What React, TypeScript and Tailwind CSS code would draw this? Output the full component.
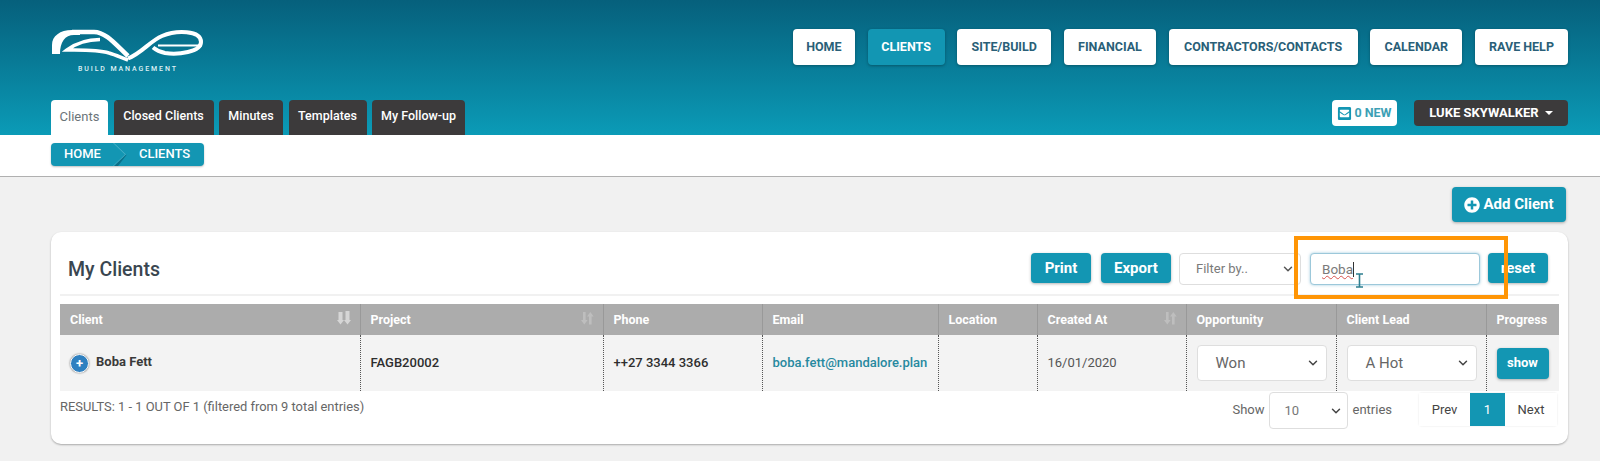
import React from 'react';
import { FaEnvelopeSquare, FaPlusCircle } from 'react-icons/fa';
import { ChevronDown } from 'lucide-react';

const navItems = [
  { label: 'HOME', width: 'w-[62px]' },
  { label: 'CLIENTS', width: 'w-[77px]' },
  { label: 'SITE/BUILD', width: 'w-[94px]' },
  { label: 'FINANCIAL', width: 'w-[92px]' },
  { label: 'CONTRACTORS/CONTACTS', width: 'w-[189px]' },
  { label: 'CALENDAR', width: 'w-[92px]' },
  { label: 'RAVE HELP', width: 'w-[93px]' },
];
const tabs = [
  { label: 'Closed Clients', width: 'w-[100px]' },
  { label: 'Minutes', width: 'w-[64px]' },
  { label: 'Templates', width: 'w-[78px]' },
  { label: 'My Follow-up', width: 'w-[93px]' },
];

const RaveLogo = () => (
  <svg width="156" height="36" viewBox="50 28 156 36" className="block" fill="none" stroke="#fff">
    {/* r stem */}
    <path d="M52 54 V45 C52 36 60 30 72 30 H80 V35 H74 C65 35 60 42 60 54 Z" fill="#fff" stroke="none" />
    {/* top band running into the left arm of the v */}
    <path d="M72 32 H94 C106 32 116 45 128 56" strokeWidth="4.5" />
    {/* pointed c */}
    <path d="M100 39.5 C87 39.5 75 44 67 50 C84 50 98 49.5 109 53 C116 55 122 58 128 60" strokeWidth="3.5" />
    {/* right arm of the v and the e */}
    <path d="M128 58.5 C142 53 150 41 162 36 C176 30 201 30 201 42 C201 52 178 55 165 53 C160 52 156 50 153 47.5" strokeWidth="4" />
    <path d="M158 45.5 H202" strokeWidth="2" />
  </svg>
);

const SortIcon = ({ strong }: { strong?: boolean }) => (
  <svg width="14" height="14" viewBox="0 0 14 14" className={strong ? 'text-[#d6d6d6]' : 'text-[#bebebe]'} fill="currentColor">
    {strong ? (
      <>
        <path d="M1.5 1h4v8h1.5L3.5 13.5 0 9h1.5z" />
        <path d="M8.5 0h4v9H14l-3.5 4.5L7 9h1.5z" />
      </>
    ) : (
      <>
        <path d="M3 1h2.6v8h2L4.3 13.5 1 9h2z" />
        <path d="M9 13.5h2.6v-8h2L10.3 1 7 5.5h2z" />
      </>
    )}
  </svg>
);

const SelectBox = ({ value, className, chevron }: { value: string; className: string; chevron: string }) => (
  <div className={`flex items-center justify-between bg-white border border-[#dedede] rounded-[4px] ${className}`}>
    <span>{value}</span>
    <ChevronDown size={14} strokeWidth={2.5} className={chevron} />
  </div>
);

const HeaderCell = ({ label, sort, strong }: { label: string; sort?: boolean; strong?: boolean }) => (
  <th className="border-l border-[#999999] first:border-l-0 px-[10px] pt-[1px] text-left font-bold text-[12.5px] text-white align-middle">
    <div className="flex items-center justify-between -mr-[1px]">
      <span>{label}</span>
      {sort && <span className="-mt-[5px]"><SortIcon strong={strong} /></span>}
    </div>
  </th>
);

const TealButton = ({ children, className }: { children: React.ReactNode; className: string }) => (
  <button className={`bg-[#1396b3] text-white font-bold rounded-[4px] shadow-[0_1px_3px_rgba(0,0,0,0.3)] ${className}`}>
    {children}
  </button>
);

export default function App() {
  return (
    <div className="relative h-[461px] overflow-hidden bg-[#f1f1f1] font-['Roboto',sans-serif]">
      {/* Header */}
      <header className="h-[135px] bg-gradient-to-b from-[#06607c] to-[#0b9bb7] flex justify-between pl-[51px] pr-[32px]">
        <div className="flex flex-col">
          <div className="mt-[28px] -ml-[1px] w-[156px]">
            <RaveLogo />
            <div className="mt-[1px] ml-[28px] text-[7px] leading-[8px] tracking-[1.9px] text-[#dff1f5] font-medium whitespace-nowrap">BUILD MANAGEMENT</div>
          </div>
          <div className="mt-auto flex gap-[5.5px] text-[12.5px]">
            <div className="h-[35px] w-[57px] pb-[2px] bg-white rounded-t-[4px] flex items-center justify-center text-[#6b7479] text-[13px]">Clients</div>
            {tabs.map(t => (
              <div key={t.label} className={`h-[35px] pb-[2px] ${t.width} bg-[#3c3a3b] rounded-t-[4px] flex items-center justify-center font-medium text-white whitespace-nowrap`}>{t.label}</div>
            ))}
          </div>
        </div>
        <div className="flex flex-col items-end">
          <nav className="mt-[29px] flex gap-[12.7px]">
            {navItems.map(n => (
              <div
                key={n.label}
                className={`h-[36px] ${n.width} rounded-[4px] flex items-center justify-center text-[12.5px] font-bold whitespace-nowrap shadow-[0_1px_3px_rgba(0,0,0,0.3)] ${n.label === 'CLIENTS' ? 'bg-[#1296b3] text-white' : 'bg-white text-[#2a5f78]'}`}
              >
                {n.label}
              </div>
            ))}
          </nav>
          <div className="mt-[35px] flex gap-[17px]">
            <div className="h-[26px] w-[65px] bg-white rounded-[4px] flex items-center justify-center gap-[2px] text-[12.5px] font-bold text-[#3d9fb5]">
              <FaEnvelopeSquare size={15} className="text-[#1396b3]" />
              0 NEW
            </div>
            <div className="h-[26px] w-[154px] bg-[#3c3a3b] rounded-[4px] flex items-center justify-center gap-[6px] text-[13px] font-bold text-white">
              LUKE SKYWALKER
              <span className="border-x-[4px] border-x-transparent border-t-[4px] border-t-white" />
            </div>
          </div>
        </div>
      </header>

      {/* Breadcrumb strip */}
      <div className="h-[42px] bg-white border-b border-[#b0b0b0] pl-[51px] pt-[8px]">
        <div className="relative w-[153px] h-[23px] pb-[2px] bg-[#1396b3] rounded-[4px] shadow-[0_1px_2px_rgba(0,0,0,0.25)] flex items-center text-[13px] font-medium text-white overflow-hidden">
          <span className="ml-[13px]">HOME</span>
          <span className="ml-[38px]">CLIENTS</span>
          <svg width="14" height="23" viewBox="0 0 14 23" className="absolute left-[62px] top-0">
            <path d="M0 0 L12 11.5 L0 23 L1 23 L13 11.5 L1 0 Z" fill="#4fb3c9" />
            <path d="M13 11.5 L1 23 L5 23 L13.5 12 Z" fill="#0b7089" />
          </svg>
        </div>
      </div>

      {/* Body */}
      <main className="pl-[51px] pr-[32px]">
        <div className="flex justify-end mt-[10px] pr-[2px]">
          <TealButton className="h-[35px] w-[114px] flex items-center justify-center gap-[3px] text-[15px]">
            <FaPlusCircle size={16} />
            Add Client
          </TealButton>
        </div>

        <section className="mt-[10px] h-[212px] bg-white rounded-[10px] shadow-[0_1px_2px_rgba(0,0,0,0.3)] px-[9px]">
          <div className="h-[64px] border-b-2 border-[#f1f1f1] flex items-start justify-between">
            <h2 className="mt-[26px] ml-[8px] text-[19.5px] leading-[24px] font-medium text-[#3a4650]">My Clients</h2>
            <div className="mt-[21px] mr-[11px] flex gap-[8px] text-[15px]">
              <TealButton className="h-[30px] w-[60px] mr-[2px]">Print</TealButton>
              <TealButton className="h-[30px] w-[70px]">Export</TealButton>
              <SelectBox value="Filter by.." className="h-[32px] w-[122px] pl-[16px] pr-[5px] text-[13px] text-[#7a7a7a]" chevron="text-[#555]" />
              <div className="h-[32px] w-[170px] ml-[1px] pl-[11px] bg-white border border-[#9cc8da] rounded-[4px] shadow-[0_0_3px_rgba(60,150,190,0.5)] flex items-center text-[13.5px] text-[#7a7a7a]">
                <span className="underline decoration-wavy decoration-[#d9534f] decoration-1">Boba</span>
                <span className="w-[1px] h-[15px] bg-[#333]" />
              </div>
              <TealButton className="h-[30px] w-[60px]">reset</TealButton>
            </div>
          </div>

          <table className="mt-[8px] w-[1499px] table-fixed border-collapse">
            <colgroup>
              <col className="w-[300px]" />
              <col className="w-[243px]" />
              <col className="w-[159px]" />
              <col className="w-[176px]" />
              <col className="w-[99px]" />
              <col className="w-[149px]" />
              <col className="w-[150px]" />
              <col className="w-[150px]" />
              <col className="w-[73px]" />
            </colgroup>
            <thead>
              <tr className="h-[31px] bg-[#acacac]">
                <HeaderCell label="Client" sort strong />
                <HeaderCell label="Project" sort />
                <HeaderCell label="Phone" />
                <HeaderCell label="Email" />
                <HeaderCell label="Location" />
                <HeaderCell label="Created At" sort />
                <HeaderCell label="Opportunity" />
                <HeaderCell label="Client Lead" />
                <HeaderCell label="Progress" />
              </tr>
            </thead>
            <tbody>
              <tr className="h-[56px] bg-[#f3f3f3] text-[13px] [&>td]:border-l [&>td]:border-dotted [&>td]:border-[#555] [&>td:first-child]:border-l-0">
                <td className="pl-[10px]">
                  <div className="flex items-center gap-[7px] -mt-[2px]">
                    <span className="w-[19px] h-[19px] mt-[3px] rounded-full bg-[#2f80c0] border border-white shadow-[0_0_2px_rgba(0,0,0,0.6)] flex items-center justify-center text-white text-[13px] leading-none font-bold">+</span>
                    <span className="font-bold text-[#3a3a3a] -mt-[1px]">Boba Fett</span>
                  </div>
                </td>
                <td className="pl-[10px] font-medium text-[#2e2e2e]">FAGB20002</td>
                <td className="pl-[10px] font-medium text-[#2e2e2e]">++27 3344 3366</td>
                <td className="pl-[10px] font-medium text-[#27899f]">boba.fett@mandalore.plan</td>
                <td />
                <td className="pl-[10px] text-[#555]">16/01/2020</td>
                <td className="pl-[10px]">
                  <SelectBox value="Won" className="h-[36px] w-[130px] pl-[18px] pr-[6px] text-[15px] text-[#666]" chevron="text-[#444]" />
                </td>
                <td className="pl-[10px]">
                  <SelectBox value="A Hot" className="h-[36px] w-[130px] pl-[18px] pr-[6px] text-[15px] text-[#666]" chevron="text-[#444]" />
                </td>
                <td className="pl-[10px]">
                  <TealButton className="h-[31px] w-[52px] text-[13px]">show</TealButton>
                </td>
              </tr>
            </tbody>
          </table>

          <div className="flex justify-between text-[13px]">
            <div className="mt-[6px] text-[#666] text-[12.9px]">RESULTS: 1 - 1 OUT OF 1 (filtered from 9 total entries)</div>
            <div className="flex items-start mr-[2px]">
              <div className="mt-[9px] text-[#666]">Show</div>
              <SelectBox value="10" className="ml-[4px] mt-[1px] h-[37px] w-[79px] pl-[15px] pr-[4px] text-[#777]" chevron="text-[#444]" />
              <div className="ml-[5px] mt-[9px] text-[#666]">entries</div>
              <div className="ml-[27px] mt-[2px] flex h-[33px] items-stretch text-[#444] shadow-[0_0_2px_rgba(0,0,0,0.12)] rounded-[3px]">
                <div className="w-[51px] flex items-center justify-center bg-white">Prev</div>
                <div className="w-[35px] flex items-center justify-center bg-[#1396b3] text-white">1</div>
                <div className="w-[52px] flex items-center justify-center bg-white">Next</div>
              </div>
            </div>
          </div>
        </section>
      </main>

      {/* Annotation over the search field */}
      <div className="absolute left-[1294px] top-[236px] w-[214px] h-[63px] border-[4px] border-[#ff9505]" />
      {/* Mouse text cursor */}
      <svg width="9" height="15" viewBox="0 0 9 15" className="absolute left-[1355px] top-[273px]" fill="none" stroke="#2f7f90" strokeWidth="1.6">
        <path d="M1 1h7M4.5 1v13M1 14h7" />
      </svg>
    </div>
  );
}
